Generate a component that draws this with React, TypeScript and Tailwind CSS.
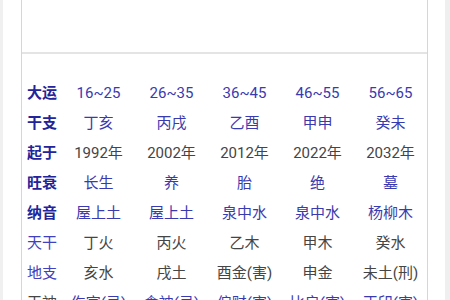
import React from "react";

type Row = { label: string; bold: boolean; labelColor: string; valColor: string; vals: string[] };

const BLUE_B = "text-[#23239a]";
const BLUE_V = "text-[#3a3ab0]";
const GRAY = "text-[#454545]";

const rows: Row[] = [
  { label: "大运", bold: true, labelColor: BLUE_B, valColor: BLUE_V, vals: ["16~25", "26~35", "36~45", "46~55", "56~65"] },
  { label: "干支", bold: true, labelColor: BLUE_B, valColor: BLUE_V, vals: ["丁亥", "丙戌", "乙酉", "甲申", "癸未"] },
  { label: "起于", bold: true, labelColor: BLUE_B, valColor: GRAY, vals: ["1992年", "2002年", "2012年", "2022年", "2032年"] },
  { label: "旺衰", bold: true, labelColor: BLUE_B, valColor: BLUE_V, vals: ["长生", "养", "胎", "绝", "墓"] },
  { label: "纳音", bold: true, labelColor: BLUE_B, valColor: BLUE_V, vals: ["屋上土", "屋上土", "泉中水", "泉中水", "杨柳木"] },
  { label: "天干", bold: false, labelColor: "text-[#4040c0]", valColor: GRAY, vals: ["丁火", "丙火", "乙木", "甲木", "癸水"] },
  { label: "地支", bold: false, labelColor: "text-[#4040c0]", valColor: GRAY, vals: ["亥水", "戌土", "酉金(害)", "申金", "未土(刑)"] },
  { label: "干神", bold: false, labelColor: GRAY, valColor: BLUE_V, vals: ["伤官(忌)", "食神(忌)", "偏财(害)", "比肩(害)", "正印(害)"] },
];

export default function App() {
  return (
    <div
      className="w-[450px] h-[300px] overflow-hidden bg-white flex"
      style={{ fontFamily: "Roboto, 'Noto Sans CJK SC', sans-serif" }}
    >
      <div className="w-[3px] shrink-0 bg-[#f0f0f0]" />
      <div className="w-[18px] shrink-0" />
      <div className="w-[407px] shrink-0 border-l border-r border-[#d6d6d6] flex flex-col">
        <div className="h-[54px] shrink-0 border-b-2 border-[#e4e4e4]" />
        <div className="pt-[24px] flex flex-col">
          {rows.map((r) => (
            <div key={r.label} className="flex h-[30px] items-center text-[15px] leading-none">
              <div className={`w-[40px] shrink-0 text-center ${r.labelColor} ${r.bold ? "font-bold" : ""}`}>
                {r.label}
              </div>
              {r.vals.map((v, i) => (
                <div key={i} className={`w-[73px] shrink-0 text-center ${r.valColor}`}>
                  {v}
                </div>
              ))}
            </div>
          ))}
        </div>
      </div>
      <div className="w-[17px] shrink-0" />
      <div className="w-[5px] shrink-0 bg-[#efefef]" />
    </div>
  );
}
